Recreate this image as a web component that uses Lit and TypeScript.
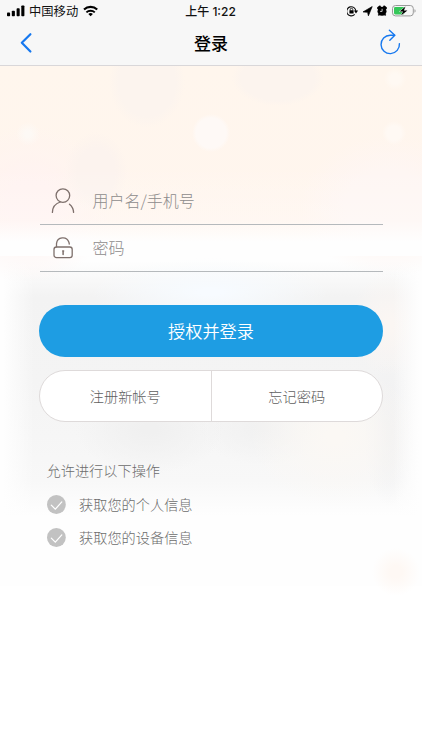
import { LitElement, html, css, svg } from "lit";
import { customElement, property } from "lit/decorators.js";

@customElement("status-bar")
class StatusBar extends LitElement {
  static styles = css`
    :host {
      display: grid;
      grid-template-columns: 1fr auto 1fr;
      align-items: center;
      height: 22px;
      padding: 0 6px 0 7px;
      box-sizing: border-box;
      color: #111;
      font-size: 12.3px;
      line-height: 22px;
    }
    .left, .right { display: flex; align-items: center; height: 22px; }
    .right { justify-content: flex-end; }
    .carrier { margin: 0 5px 0 4px; white-space: nowrap; }
    .time { font-weight: 500; font-family: "Inter", "Noto Sans CJK SC", sans-serif; font-size: 12px; line-height: 23px; height: 22px; margin-right: 2px; white-space: nowrap; }
    svg { display: block; flex: none; }
  `;
  render() {
    return html`
      <div class="left">
        <svg width="18" height="12" viewBox="0 0 18 12" fill="#000">
          <rect x="0" y="7.6" width="3.1" height="3.7" rx=".8" />
          <rect x="4.8" y="5.8" width="3.1" height="5.5" rx=".8" />
          <rect x="9.6" y="3.2" width="3.1" height="8.1" rx=".8" />
          <rect x="14.3" y="0.5" width="3.1" height="10.8" rx=".8" />
        </svg>
        <span class="carrier">中国移动</span>
        <svg width="16" height="12" viewBox="0 0 16 12">
          <path d="M1 4.5a9.8 9.8 0 0 1 13.2 0" fill="none" stroke="#000" stroke-width="2.2" />
          <path d="M3.4 7.4a6 6 0 0 1 8.4 0" fill="none" stroke="#000" stroke-width="1.9" />
          <path d="M7.6 11.3 5.3 9.1a3.3 3.3 0 0 1 4.6 0Z" />
        </svg>
      </div>
      <div class="time">上午 1:22</div>
      <div class="right">
        <svg width="69" height="14" viewBox="0 0 69 14">
          <path d="M7.7 10.4a4.6 4.6 0 1 1 1.2-3.2" fill="none" stroke="#111" stroke-width="1.1" />
          <path d="M6.9 6.6h4.2L9 9.5Z" />
          <rect x="2.4" y="6.3" width="4.2" height="3.2" rx=".5" />
          <path d="M3.2 6.5V5.6a1.3 1.3 0 0 1 2.6 0v.9" fill="none" stroke="#000" stroke-width=".8" />
          <path d="M16 7.9 25.2 2.6 21.4 11.8 20.6 8.3Z" stroke="#000" stroke-width=".7" stroke-linejoin="round" />
          <circle cx="35" cy="7.3" r="4.5" />
          <path d="m31.1 4.1 1.7-1.5M38.9 4.1l-1.7-1.5" stroke="#000" stroke-width="2.2" stroke-linecap="round" />
          <path d="m32 10.6-.6.8M38 10.6l.6.8" stroke="#000" stroke-width="1.7" />
          <path d="M35.1 4.8v2.6h-2" fill="none" stroke="#f7f7f7" stroke-width=".8" />
          <rect x="45.5" y="1.5" width="20.8" height="10.4" rx="3" fill="none" stroke="#999" />
          <path d="M67.5 5.3v3.4q1.1-.3 1.1-1.7t-1.1-1.7" fill="#999" />
          <rect x="47" y="3" width="10.4" height="7.4" rx="1.3" fill="#35c759" />
          <path d="M58.6 2.6 52.6 7.4h3.4L54 11.6l6.4-5.2h-3.6Z" stroke="#f7f7f7" stroke-width=".9" paint-order="stroke" />
        </svg>
      </div>`;
  }
}

@customElement("nav-bar")
class NavBar extends LitElement {
  static styles = css`
    :host {
      display: grid;
      grid-template-columns: 44px 1fr 44px;
      align-items: center;
      height: 44px;
      box-sizing: border-box;
      border-bottom: 1px solid #d9d7d9;
    }
    .title { text-align: center; font-size: 17px; font-weight: 500; line-height: 41px; height: 43px; color: #000; }
    svg { display: block; }
  `;
  render() {
    return html`
      <svg width="44" height="43" viewBox="0 0 44 43">
        <path d="m30.4 12.2-8.6 8.6 8.6 8.7" fill="none" stroke="#1678ef" stroke-width="2.2" stroke-linecap="round" stroke-linejoin="round" />
      </svg>
      <div class="title">登录</div>
      <svg width="44" height="43" viewBox="0 0 44 43">
        <path d="M16.6 13.2h-4.4A9.2 9.2 0 1 0 21.4 21.6" fill="none" stroke="#1678ef" stroke-width="1.4" stroke-linecap="round" />
        <path d="m11.4 8.2 5.4 5-5 5" fill="none" stroke="#1678ef" stroke-width="1.4" stroke-linecap="round" stroke-linejoin="round" />
      </svg>`;
  }
}

const userIcon = svg`
  <circle cx="12.9" cy="7.6" r="6.8" />
  <path d="M2.4 24.4q.2-8 7.8-10.4M19.5 16.2q3.9 3.2 4.1 8.2" />`;
const lockIcon = svg`
  <rect x="4" y="12" width="18.2" height="10.6" rx="2.4" />
  <path d="M6.5 11.8V8.6a6.4 6.4 0 0 1 12.4-1.4l.4 1.8" />
  <path d="M13.1 16.2v3.2M12.7 16.1h.9" stroke-width="1.5" />`;

@customElement("login-field")
class LoginField extends LitElement {
  @property() icon = "user";
  @property() label = "";
  static styles = css`
    :host {
      display: flex;
      align-items: center;
      box-sizing: border-box;
      height: 47px;
      padding-left: 10px;
      border-bottom: 1px solid #b5b9bc;
      font-size: 16px;
      font-weight: 300;
      color: #8e8c8c;
    }
    svg { fill: none; stroke: #7e706c; stroke-width: 1.3; stroke-linecap: round; margin-right: 17px; }
    span { padding-bottom: 2px; }
  `;
  render() {
    return html`
      <svg width="26" height="27" viewBox="0 0 26 27">${this.icon === "user" ? userIcon : lockIcon}</svg>
      <span>${this.label}</span>`;
  }
}

@customElement("app-root")
class AppRoot extends LitElement {
  static styles = css`
    :host {
      display: flex;
      flex-direction: column;
      height: 750px;
      overflow: hidden;
      background: #fff;
      font-family: "Noto Sans CJK SC", sans-serif;
    }
    .top { background: #f7f7f7; }
    .page {
      flex: 1;
      display: flex;
      flex-direction: column;
      padding: 112px 39px 0;
      background:
        radial-gradient(circle at 211px 67px, #fef9f6 15px, rgba(254,249,246,0) 19px),
        radial-gradient(circle at 28px 68px, #fdf9f5 3px, rgba(253,249,245,0) 12px),
        radial-gradient(circle at 394px 67px, #fff9f4 7px, rgba(255,249,244,0) 12px),
        radial-gradient(circle at 395px 13px, #fff9f3 5px, rgba(255,249,243,0) 11px),
        linear-gradient(rgba(254,254,254,0) 100px, rgba(254,254,254,0.25) 155px, rgba(254,254,254,1) 176px) 0 0 / 422px 190px no-repeat,
        radial-gradient(ellipse 38px 46px at 147px 16px, #fcf4ee 75%, rgba(252,244,238,0)),
        radial-gradient(ellipse 46px 28px at 278px 12px, #fcf4ee 80%, rgba(252,244,238,0)),
        radial-gradient(ellipse 32px 40px at 96px 106px, #fcf3ee 60%, rgba(252,243,238,0)),
        radial-gradient(ellipse 80px 80px at 30px 138px, #fff3f1 30%, rgba(255,243,241,0)),
        radial-gradient(ellipse 90px 70px at 390px 140px, #fef6f3 50%, rgba(254,246,243,0)),
        linear-gradient(#fff6ed, #fff5ee) 0 0 / 422px 190px no-repeat,
        radial-gradient(circle at 396px 506px, #fef8f4 6px, rgba(254,248,244,0) 24px),
        linear-gradient(90deg, #fefefe 3px, rgba(254,254,254,0) 34px, rgba(254,254,254,0) 393px, #fefefe 419px) 0 190px / 422px 265px no-repeat,
        radial-gradient(ellipse 120px 34px at 210px 226px, #f7fbff 10%, rgba(247,251,255,0)),
        radial-gradient(ellipse 85px 70px at 335px 370px, #fbf8f4 10%, rgba(251,248,244,0)),
        radial-gradient(ellipse 40px 52px at 389px 258px, #fbf6f3 10%, rgba(251,246,243,0)),
        radial-gradient(ellipse 26px 75px at 389px 365px, #f0f0f1 10%, rgba(240,240,241,0)),
        radial-gradient(ellipse 75px 45px at 150px 363px, #f0f0f0 10%, rgba(240,240,240,0)),
        radial-gradient(ellipse 65px 38px at 263px 361px, #f1f1f1 10%, rgba(241,241,241,0)),
        linear-gradient(#fefefe, #f3f3f3 36px, #f4f4f4 120px, #f6f6f6 175px, #f8f8f8 220px, #fefefe 255px) 0 195px / 422px 256px no-repeat,
        linear-gradient(#fefefe, #fefefe) 0 0 / 422px 520px no-repeat,
        #fff;
    }
    .fields { margin: 0 0.5px; }
    .primary {
      height: 52px;
      margin-top: 33px;
      border-radius: 26px;
      background: #1e9de3;
      color: #fff;
      text-align: center;
      font-size: 17.2px;
      font-weight: 350;
      line-height: 51px;
    }
    .links {
      display: flex;
      height: 52px;
      box-sizing: border-box;
      margin-top: 13px;
      border: 1px solid #dedada;
      border-radius: 26px;
      background: #fff;
      overflow: hidden;
    }
    .link {
      flex: 1;
      text-align: center;
      line-height: 50px;
      font-size: 14.2px;
      font-weight: 300;
      color: #606060;
    }
    .link + .link { border-left: 1px solid #dedada; }
    .scopes { padding: 31px 8px 0 7.5px; font-size: 14.2px; font-weight: 300; color: #6c6c6c; }
    .heading { line-height: 35px; height: 35px; }
    .scope { display: flex; align-items: center; gap: 13.5px; height: 33px; }
    .scope svg { display: block; }
    .scope span { padding-bottom: 2px; }
  `;
  render() {
    return html`
      <div class="top">
        <status-bar></status-bar>
        <nav-bar></nav-bar>
      </div>
      <div class="page">
        <div class="fields">
          <login-field icon="user" label="用户名/手机号"></login-field>
          <login-field icon="lock" label="密码"></login-field>
        </div>
        <div class="primary">授权并登录</div>
        <div class="links">
          <div class="link">注册新帐号</div>
          <div class="link">忘记密码</div>
        </div>
        <div class="scopes">
          <div class="heading">允许进行以下操作</div>
          ${["获取您的个人信息", "获取您的设备信息"].map(
            (text) => html`<div class="scope">
              <svg width="19" height="19" viewBox="0 0 19 19">
                <circle cx="9.4" cy="9.5" r="9.4" fill="#c2c2c2" />
                <path d="m4.3 10.2 4 4 6.5-7.3" fill="none" stroke="#fff" stroke-width="1.2" stroke-linecap="round" />
              </svg>
              <span>${text}</span>
            </div>`
          )}
        </div>
      </div>`;
  }
}
